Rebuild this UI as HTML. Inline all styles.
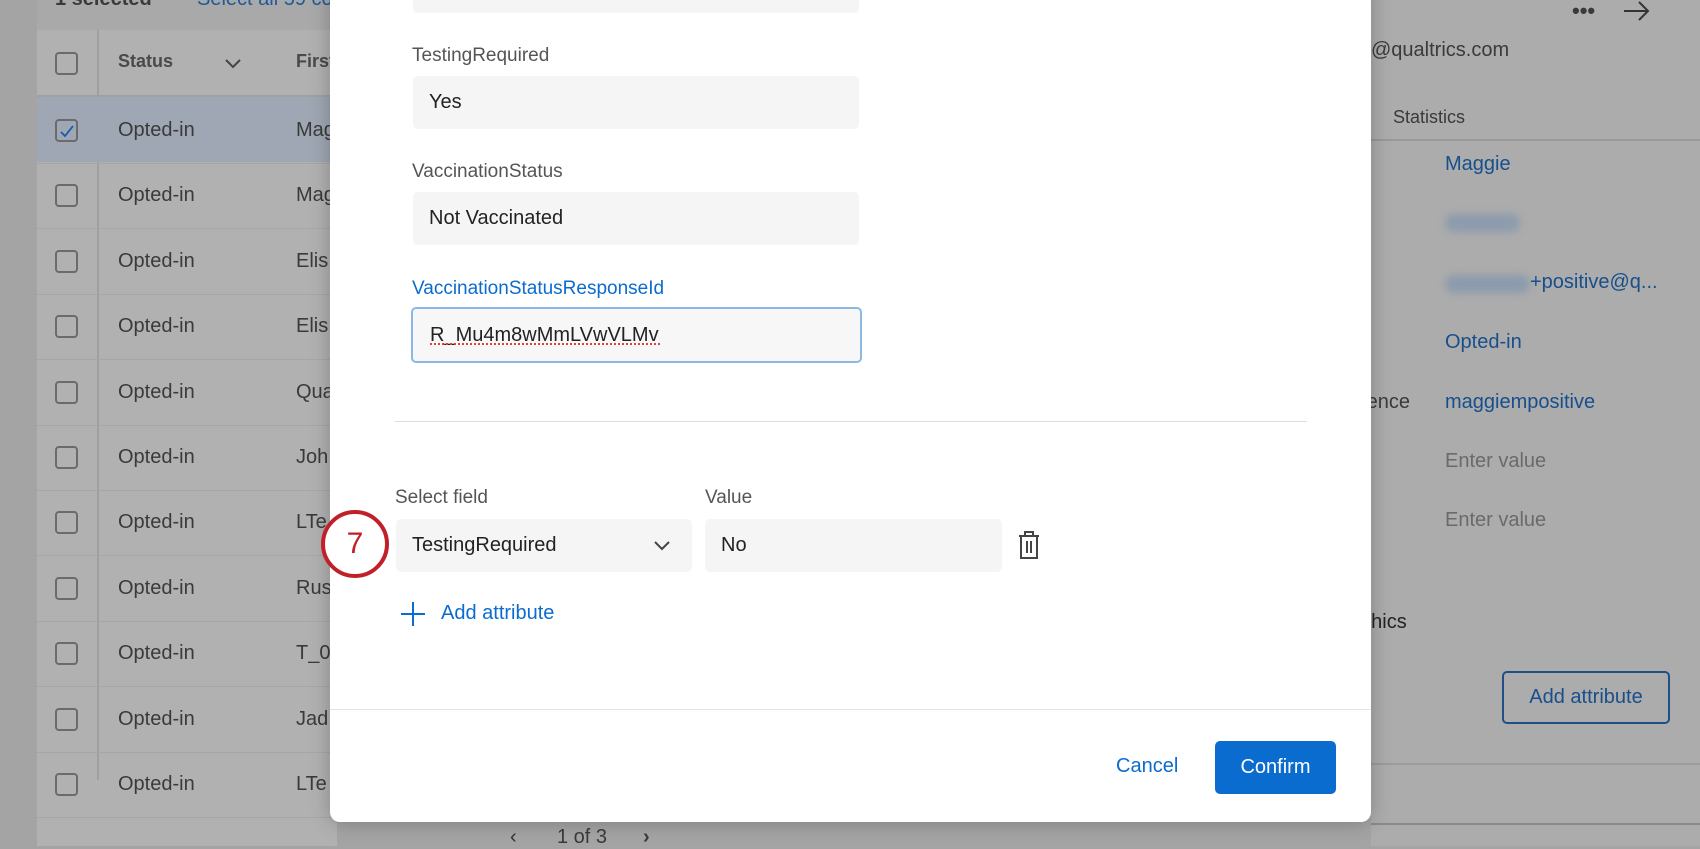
<!DOCTYPE html>
<html><head><meta charset="utf-8"><style>
*{box-sizing:border-box;margin:0;padding:0}
body{width:1700px;height:846px;overflow:hidden;background:#a4a4a4;font-family:"Liberation Sans",sans-serif;position:relative}
.abs{position:absolute}
.t{font-size:20px;color:#3a3a3a;white-space:nowrap}
.cb{position:absolute;left:55px;width:23px;height:23px;border:2px solid #6b6b6b;border-radius:4px}
.lbl{position:absolute;font-size:19px;color:#555;white-space:nowrap}
.box{position:absolute;background:#f5f5f5;border-radius:5px;font-size:20px;color:#222;padding-left:16px;display:flex;align-items:center}
.rv{position:absolute;left:1445px;font-size:20px;color:#174f8c;white-space:nowrap}
</style></head><body>
<div class="abs" style="left:37px;top:0;width:300px;height:846px;background:#b1b1b1"></div>
<div class="abs" style="left:37px;top:0;width:300px;height:30px;background:#a9a9a9"></div>
<div class="abs t" style="left:55px;top:-12px;font-weight:bold;font-size:20px">1 selected</div>
<div class="abs t" style="left:197px;top:-12px;color:#1c5a9c">Select all 59 co</div>
<div class="abs" style="left:97px;top:30px;width:2px;height:750px;background:#a0a0a0"></div>
<div class="abs" style="left:37px;top:95px;width:300px;height:2px;background:#a0a0a0"></div>
<div class="cb" style="top:52px"></div>
<div class="abs t" style="left:118px;top:51px;font-weight:bold;font-size:18px;color:#4a4a4a">Status</div>
<svg class="abs" style="left:224px;top:58px" width="18" height="12"><path d="M2 2l7 7 7-7" stroke="#444" stroke-width="2" fill="none"/></svg>
<div class="abs t" style="left:296px;top:51px;font-weight:bold;font-size:18px;color:#4a4a4a">First</div>
<div class="abs" style="left:37px;top:97px;width:300px;height:65px;background:#9ea7b3"></div>
<div class="cb" style="top:119px"></div>
<svg class="abs" style="left:59px;top:123px" width="16" height="16"><path d="M2 9l4 4 8-10" stroke="#1c5ab0" stroke-width="1.8" fill="none"/></svg>
<div id="rows"></div>
<script>
var names=["Mag","Mag","Elis","Elis","Qua","Joh","LTe","Rus","T_0","Jad","LTe"];
var h="";for(var i=0;i<11;i++){var c=131+i*65.4;
h+='<div class="abs" style="left:37px;top:'+(c+32)+'px;width:300px;height:1px;background:#a6a6a6"></div>';
if(i>0)h+='<div class="cb" style="top:'+(c-12)+'px"></div>';
h+='<div class="abs t" style="left:118px;top:'+(c-12)+'px">Opted-in</div><div class="abs t" style="left:296px;top:'+(c-12)+'px">'+names[i]+'</div>';}
document.getElementById('rows').innerHTML=h;
</script>
<div class="abs t" style="left:510px;top:826px;color:#333">‹</div>
<div class="abs t" style="left:557px;top:826px">1 of 3</div>
<div class="abs t" style="left:643px;top:826px;font-weight:bold">›</div>
<div class="abs" style="left:1371px;top:0;width:329px;height:846px;background:#acacac"></div>
<div class="abs t" style="left:1572px;top:-2px;font-size:22px;font-weight:bold">•••</div>
<svg class="abs" style="left:1622px;top:0" width="30" height="22"><path d="M2 11h24M17 2l9 9-9 9" stroke="#333" stroke-width="2" fill="none"/></svg>
<div class="abs t" style="left:1371px;top:39px">@qualtrics.com</div>
<div class="abs t" style="left:1393px;top:107px;font-size:18px">Statistics</div>
<div class="abs" style="left:1371px;top:139px;width:329px;height:2px;background:#999"></div>
<div class="rv" style="top:153px">Maggie</div>
<div class="abs" style="left:1445px;top:214px;width:75px;height:18px;background:#8c9bad;border-radius:9px;filter:blur(4px)"></div>
<div class="abs" style="left:1445px;top:275px;width:85px;height:18px;background:#8c9bad;border-radius:9px;filter:blur(4px)"></div>
<div class="rv" style="left:1530px;top:271px">+positive@q...</div>
<div class="rv" style="top:331px">Opted-in</div>
<div class="abs t" style="left:1360px;top:391px">rence</div>
<div class="rv" style="top:391px">maggiempositive</div>
<div class="rv" style="top:450px;color:#6a6a6a">Enter value</div>
<div class="rv" style="top:509px;color:#6a6a6a">Enter value</div>
<div class="abs t" style="left:1360px;top:611px;color:#222">phics</div>
<div class="abs" style="left:1502px;top:671px;width:168px;height:53px;border:2px solid #1f4f86;border-radius:5px;font-size:20px;color:#174f8c;display:flex;align-items:center;justify-content:center">Add attribute</div>
<div class="abs" style="left:1371px;top:763px;width:329px;height:2px;background:#9c9c9c"></div>
<div class="abs" style="left:1371px;top:823px;width:329px;height:2px;background:#8a8a8a"></div>
<div class="abs" style="left:330px;top:-20px;width:1041px;height:842px;background:#fff;border-radius:10px;box-shadow:0 0 20px rgba(0,0,0,.25)"></div>
<div class="box" style="left:413px;top:-20px;width:446px;height:33px"></div>
<div class="lbl" style="left:412px;top:45px">TestingRequired</div>
<div class="box" style="left:413px;top:76px;width:446px;height:53px">Yes</div>
<div class="lbl" style="left:412px;top:161px">VaccinationStatus</div>
<div class="box" style="left:413px;top:192px;width:446px;height:53px">Not Vaccinated</div>
<div class="lbl" style="left:412px;top:278px;color:#0b6ccf">VaccinationStatusResponseId</div>
<div class="box" style="left:411px;top:307px;width:451px;height:56px;border:2px solid #8bb9e6;background:#f7f7f7;padding-left:17px">R_Mu4m8wMmLVwVLMv</div>
<div class="abs" style="left:430px;top:343px;width:230px;border-bottom:2px dotted #e04040"></div>
<div class="abs" style="left:395px;top:421px;width:912px;height:1px;background:#ddd"></div>
<div class="lbl" style="left:395px;top:487px">Select field</div>
<div class="lbl" style="left:705px;top:487px">Value</div>
<div class="box" style="left:396px;top:519px;width:296px;height:53px">TestingRequired</div>
<svg class="abs" style="left:653px;top:540px" width="18" height="12"><path d="M2 2l7 7 7-7" stroke="#444" stroke-width="2" fill="none"/></svg>
<div class="box" style="left:705px;top:519px;width:297px;height:53px">No</div>
<svg class="abs" style="left:1016px;top:530px" width="26" height="32"><path d="M9 5V2h8v3M3 6h20M5 6v22h16V6M11 11v12M15 11v12" stroke="#444" stroke-width="2" fill="none"/></svg>
<div class="abs" style="left:321px;top:510px;width:68px;height:68px;border:4px solid #c0202a;border-radius:50%;background:#fff;font-size:30px;color:#c0202a;display:flex;align-items:center;justify-content:center">7</div>
<svg class="abs" style="left:400px;top:601px" width="26" height="26"><path d="M13 1v24M1 13h24" stroke="#0b6ccf" stroke-width="2"/></svg>
<div class="abs" style="left:441px;top:602px;font-size:20px;color:#0b6ccf">Add attribute</div>
<div class="abs" style="left:330px;top:709px;width:1041px;height:1px;background:#e4e4e4"></div>
<div class="abs" style="left:1116px;top:755px;font-size:20px;color:#0b6ccf">Cancel</div>
<div class="abs" style="left:1215px;top:741px;width:121px;height:53px;background:#0b6ccf;border-radius:5px;color:#fff;font-size:20px;display:flex;align-items:center;justify-content:center">Confirm</div>
</body></html>
